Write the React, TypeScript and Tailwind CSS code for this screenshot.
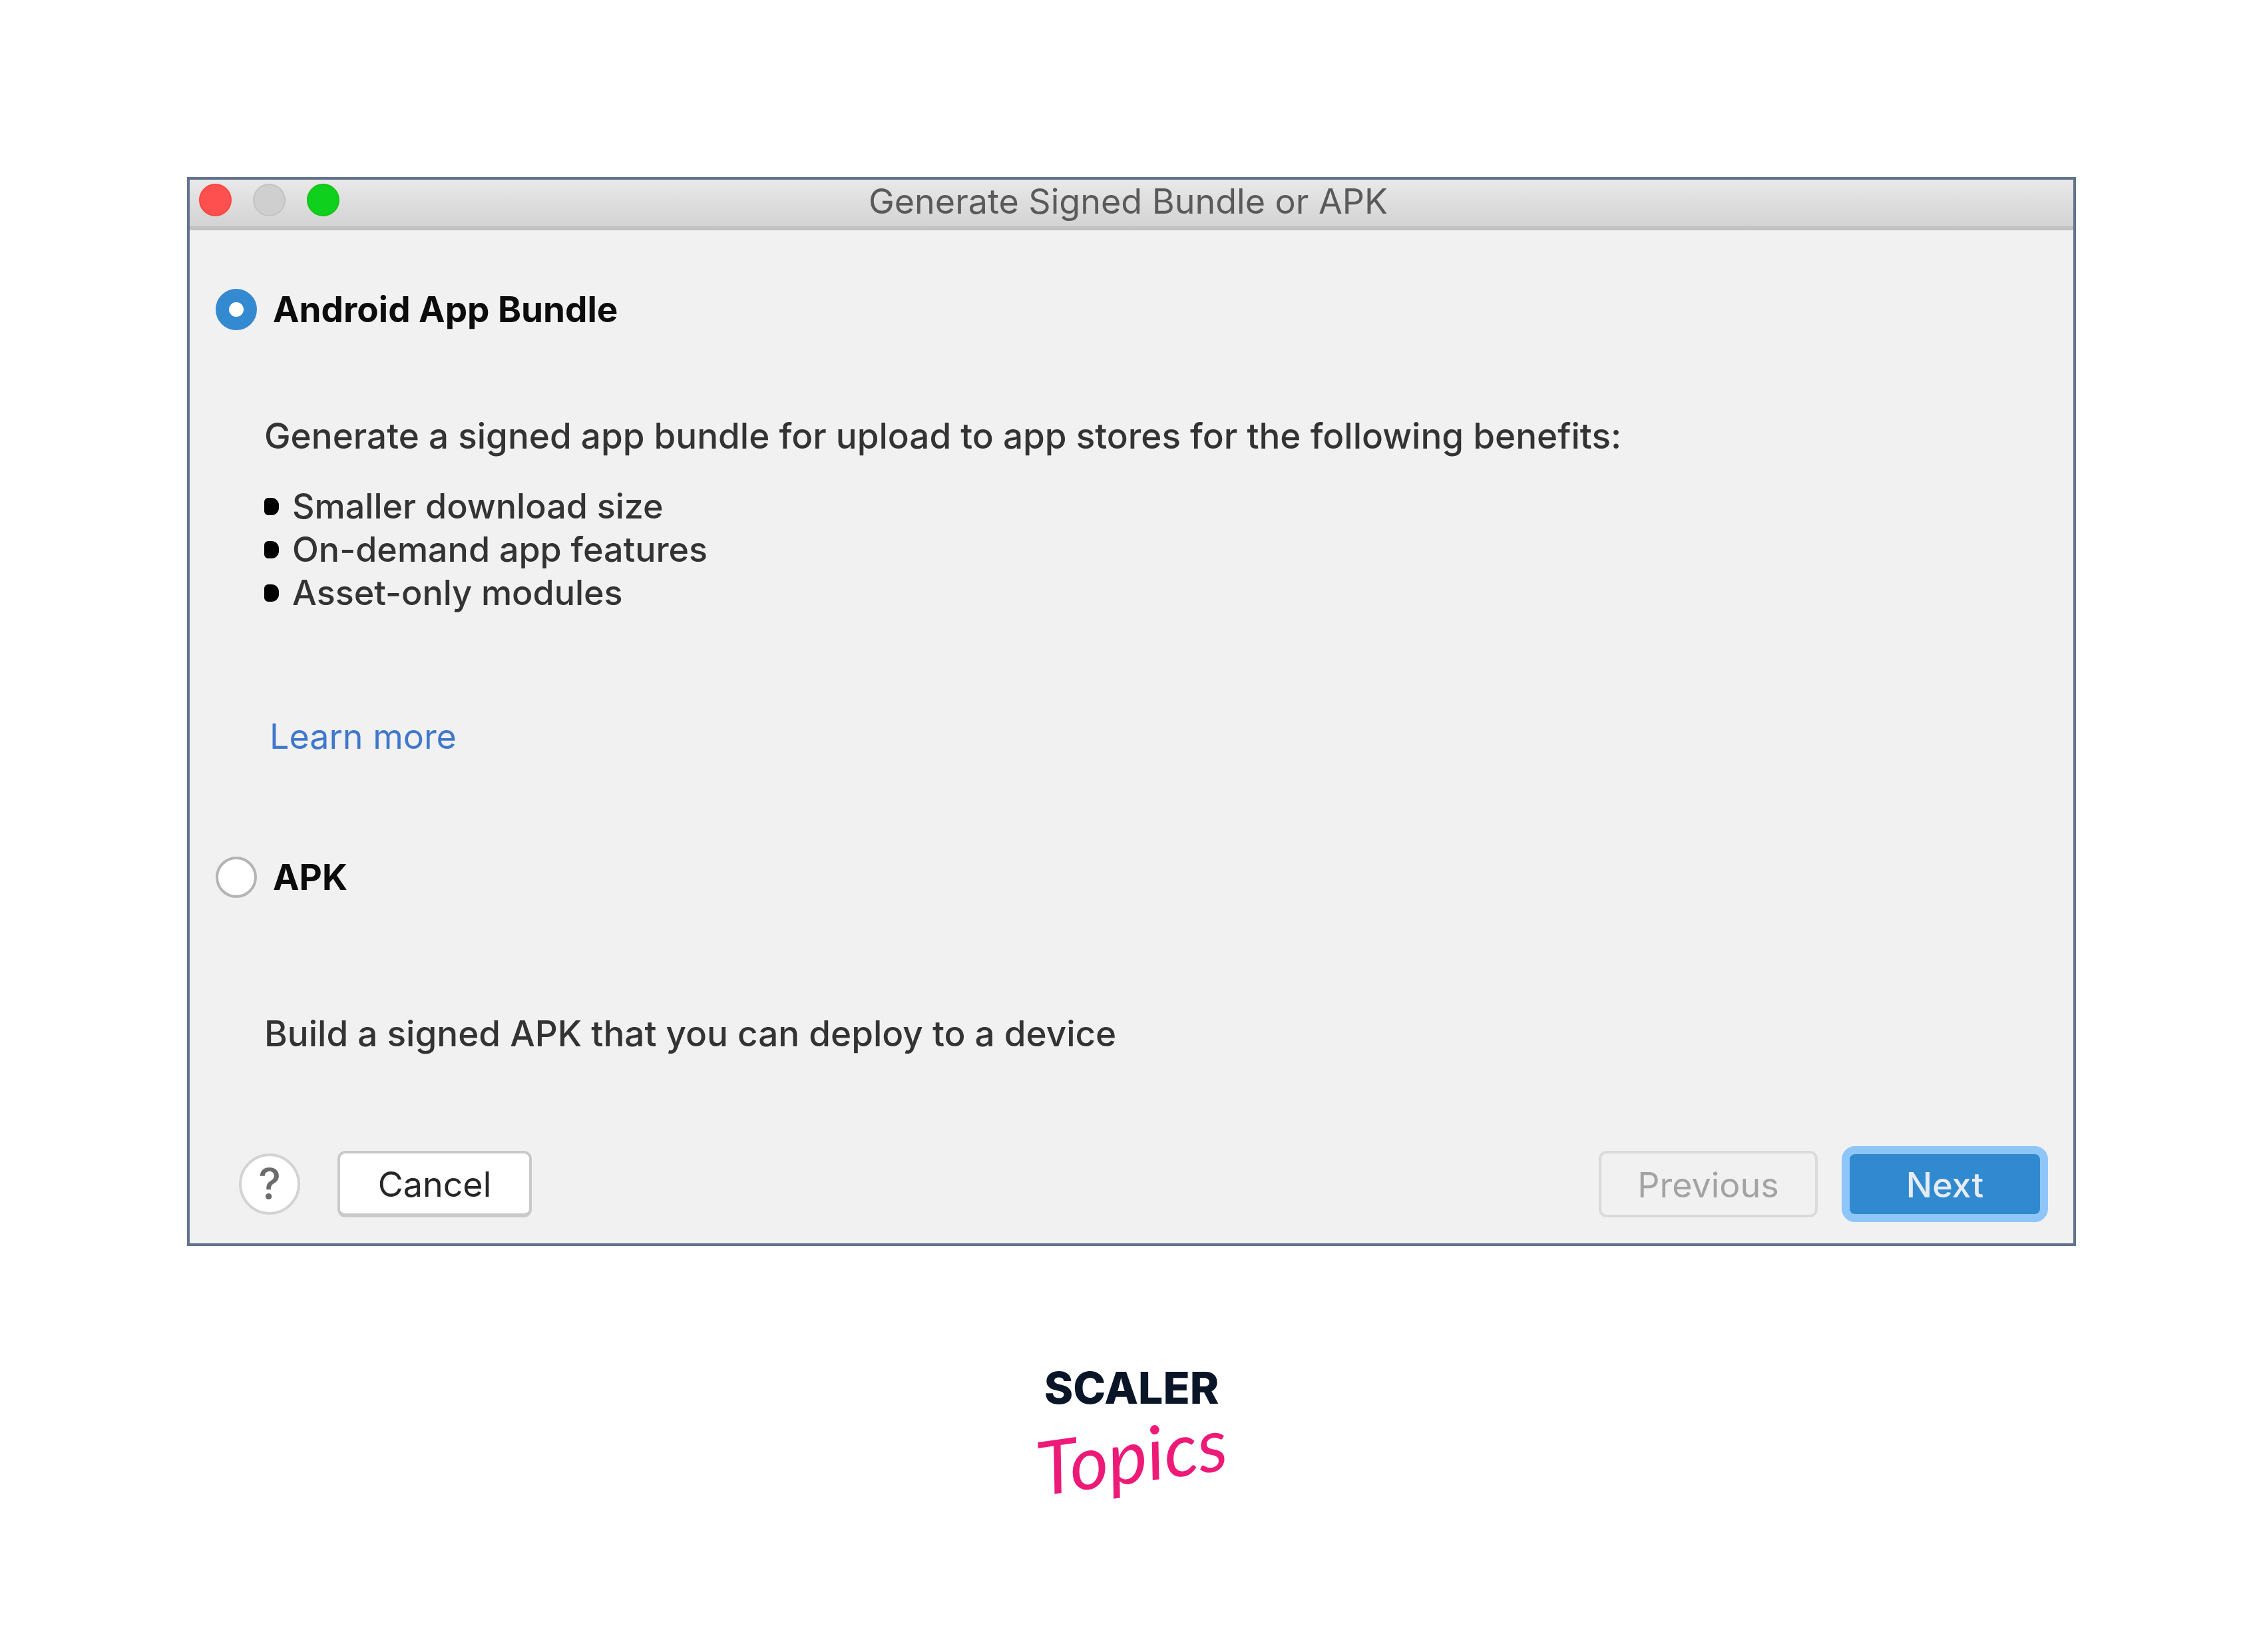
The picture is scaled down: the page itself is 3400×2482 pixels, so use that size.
import { useState } from "react";

type ExportType = "bundle" | "apk";

const benefits = ["Smaller download size", "On-demand app features", "Asset-only modules"];

function TitleBar() {
  return (
    <header className="grid grid-cols-[1fr_auto_1fr] items-start border-b-6 border-[#c2c2c2] bg-linear-to-b from-[#e9e9e9] to-[#d3d3d3] pt-1 pr-6 pb-2 pl-3.5">
      <div className="flex gap-8 pt-0.5">
        <button type="button" aria-label="Close" className="size-[49px] rounded-full border-2 border-[#fc4444] bg-[#ff5050]" />
        <button type="button" aria-label="Minimize" disabled className="size-[49px] rounded-full border-2 border-[#c3c3c3] bg-[#cfcfcf]" />
        <button type="button" aria-label="Zoom" className="size-[49px] rounded-full border-2 border-[#12c412] bg-[#0fd01c]" />
      </div>
      <h1 className="text-[52px] leading-[58px] text-[#5a5a5a]">Generate Signed Bundle or APK</h1>
    </header>
  );
}

interface ExportOptionProps {
  value: ExportType;
  label: string;
  selected: ExportType;
  onSelect: (value: ExportType) => void;
}

function ExportOption({ value, label, selected, onSelect }: ExportOptionProps) {
  return (
    <label className="flex items-center gap-6 text-[53px] leading-[66px] font-bold text-[#0c0c0c]">
      <input
        type="radio"
        name="export-type"
        value={value}
        checked={selected === value}
        onChange={() => onSelect(value)}
        className="size-[62px] appearance-none rounded-full border-4 border-[#b4b4b4] bg-white checked:border-[20px] checked:border-[#348ad0]"
      />
      {label}
    </label>
  );
}

function Logo() {
  return (
    <div className="flex flex-col items-center">
      <span className="text-[66px] leading-[64px] font-extrabold text-[#0a1628]">SCALER</span>
      <span className="mt-3 -rotate-8 text-[112px] leading-[112px] text-[#ed1a78] italic font-['Lato','Liberation_Sans',sans-serif]">
        Topics
      </span>
    </div>
  );
}

export default function App() {
  const [selected, setSelected] = useState<ExportType>("bundle");

  return (
    <main className="flex min-h-screen flex-col bg-white px-[281px] pt-[266px] font-['Inter','Liberation_Sans',sans-serif]">
      <section className="border-4 border-[#62728f] bg-[#f1f1f1]">
        <TitleBar />
        <form onSubmit={(e) => e.preventDefault()}>
          <div className="px-[39px] pt-[86px]">
            <ExportOption value="bundle" label="Android App Bundle" selected={selected} onSelect={setSelected} />
            <div className="pl-[73px] text-[52px] leading-[65px] font-medium text-[#333333]">
              <p className="pt-[125px] text-[53px]">
                Generate a signed app bundle for upload to app stores for the following benefits:
              </p>
              <ul className="pt-10">
                {benefits.map((benefit) => (
                  <li key={benefit} className="flex items-center gap-5">
                    <span className="h-[26px] w-[22px] rounded-l-md rounded-r-[11px] bg-black" />
                    {benefit}
                  </li>
                ))}
              </ul>
              <a href="#learn-more" className="mt-[151px] ml-2 inline-block font-normal text-[#3f78cc]">
                Learn more
              </a>
            </div>
            <div className="pt-[146px]">
              <ExportOption value="apk" label="APK" selected={selected} onSelect={setSelected} />
            </div>
            <p className="pt-[170px] pl-[73px] text-[53px] leading-[65px] font-medium text-[#333333]">
              Build a signed APK that you can deploy to a device
            </p>
          </div>
          <footer className="flex items-center px-[38px] pt-[136px] pb-8 text-[52px] leading-[60px]">
            <button
              type="button"
              aria-label="Help"
              className="ml-9 size-[92px] rounded-full border-4 border-[#d3d3d3] bg-white text-[64px] font-medium text-[#6b6b6b]"
            >
              ?
            </button>
            <button
              type="button"
              className="ml-14 h-[100px] w-[292px] rounded-xl border-4 border-b-6 border-[#c9c9c9] bg-white pt-1 text-[#262626]"
            >
              Cancel
            </button>
            <button
              type="button"
              disabled
              className="ml-auto h-[100px] w-[329px] rounded-xl border-4 border-[#dadada] pt-1 text-[#a3a3a3]"
            >
              Previous
            </button>
            <button
              type="submit"
              className="ml-9 h-[114px] w-[310px] rounded-[20px] border-12 border-[#8fc6fa] bg-[#3189cf] pt-1 font-medium text-[#e6ecf5]"
            >
              Next
            </button>
          </footer>
        </form>
      </section>
      <div className="pt-[181px]">
        <Logo />
      </div>
    </main>
  );
}
